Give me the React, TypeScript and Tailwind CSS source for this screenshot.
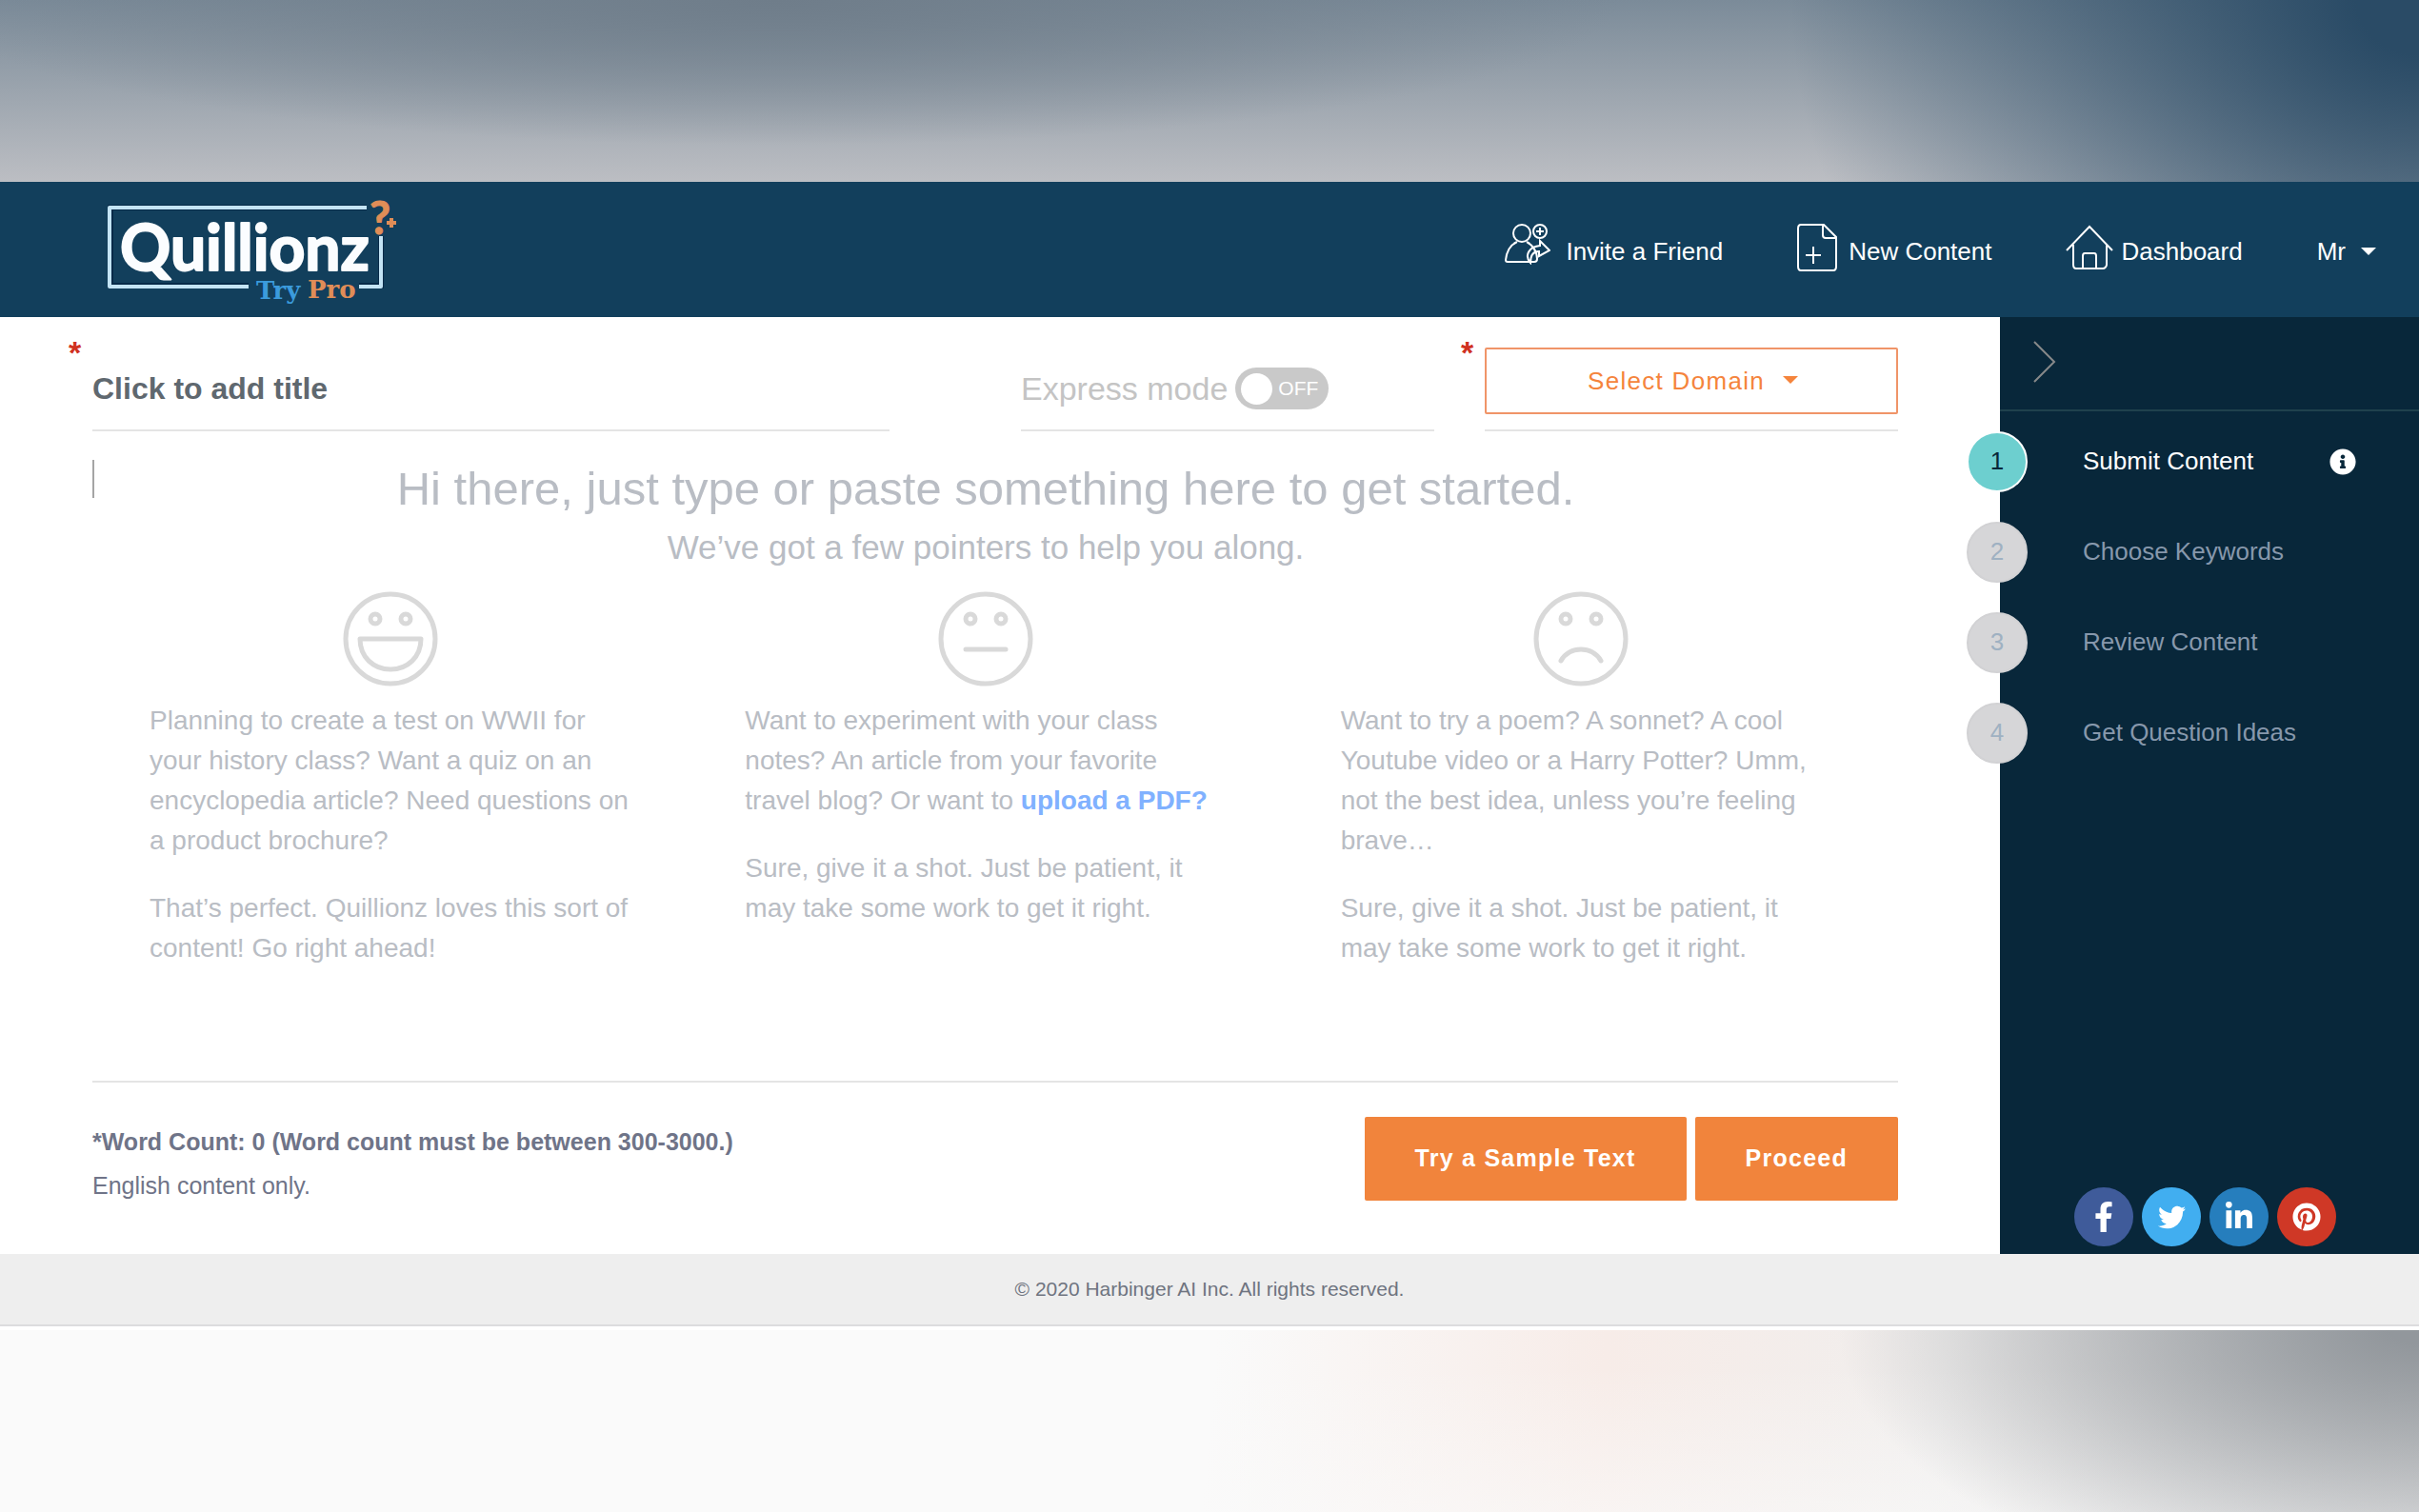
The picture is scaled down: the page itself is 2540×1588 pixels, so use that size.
import { FaFacebookF, FaInfoCircle, FaLinkedinIn, FaPinterest, FaTwitter } from "react-icons/fa";

interface Pointer {
  face: "happy" | "neutral" | "sad";
  first: React.ReactNode;
  second: string;
}

const steps = ["Submit Content", "Choose Keywords", "Review Content", "Get Question Ideas"];

const socials = [
  { name: "Facebook", icon: <FaFacebookF size={32} />, color: "bg-[#3f5b9a]" },
  { name: "Twitter", icon: <FaTwitter size={29} />, color: "bg-[#41aef0]" },
  { name: "LinkedIn", icon: <FaLinkedinIn size={32} />, color: "bg-[#267ebd]" },
  { name: "Pinterest", icon: <FaPinterest size={30} />, color: "bg-[#cf3826]" },
];

const pointers: Pointer[] = [
  {
    face: "happy",
    first:
      "Planning to create a test on WWII for your history class? Want a quiz on an encyclopedia article? Need questions on a product brochure?",
    second: "That’s perfect. Quillionz loves this sort of content! Go right ahead!",
  },
  {
    face: "neutral",
    first: (
      <>
        Want to experiment with your class notes? An article from your favorite travel blog? Or want to{" "}
        <a href="#upload" className="font-bold text-[#80b1ff]">
          upload a PDF?
        </a>
      </>
    ),
    second: "Sure, give it a shot. Just be patient, it may take some work to get it right.",
  },
  {
    face: "sad",
    first:
      "Want to try a poem? A sonnet? A cool Youtube video or a Harry Potter? Umm, not the best idea, unless you’re feeling brave…",
    second: "Sure, give it a shot. Just be patient, it may take some work to get it right.",
  },
];

function Logo() {
  return (
    <svg width="310" height="142" viewBox="0 -13 310 142" role="img" aria-label="Quillionz Try Pro">
      <g fill="none" stroke="#062a48" strokeWidth="6">
        <path d="M273 14H4V96H149M265 96H288V44" />
      </g>
      <g fill="none" stroke="#c3e4f5" strokeWidth="4" strokeLinejoin="round">
        <path d="M273 14H3V97H149M265 97H288V44" />
      </g>
      <text
        x="14"
        y="80"
        fill="#fbfdff"
        stroke="#fbfdff"
        strokeWidth="2"
        strokeLinejoin="round"
        fontFamily="Lato, sans-serif"
        fontWeight="700"
        fontSize="66"
      >
        Quillionz
      </text>
      <text x="157" y="110" fill="#3b9bdc" fontFamily="DejaVu Serif, serif" fontWeight="700" fontSize="26">
        Try
      </text>
      <text x="211" y="109" fill="#e08d57" fontFamily="DejaVu Serif, serif" fontWeight="700" fontSize="26">
        Pro
      </text>
      <text
        x="276"
        y="42"
        fill="#e08d57"
        stroke="#e08d57"
        strokeLinejoin="round"
        fontFamily="Lato, sans-serif"
        fontWeight="700"
        fontSize="48"
      >
        ?
      </text>
      <path d="M299 25V35M294 30H304" stroke="#e08d57" strokeWidth="4" />
    </svg>
  );
}

function InviteIcon() {
  return (
    <svg width="48" height="44" viewBox="0 0 48 44" fill="none" stroke="white" strokeWidth="2" className="mb-4">
      <circle cx="18" cy="11" r="9" />
      <path d="M13 20C6 23 2 30 1 39c0 1 1 2 2 2h28c2 0 3-1 3-3 0-8-5-15-11-18" />
      <circle cx="37" cy="9" r="7" />
      <path d="M37 5v8M33 9h8" />
      <path d="M37 19L47 29L36 35V30C30 30 27 34 27 42C20 34 26 25 37 24z" />
    </svg>
  );
}

function NewContentIcon() {
  return (
    <svg width="42" height="50" viewBox="0 0 42 50" fill="none" stroke="white" strokeWidth="2" className="mb-2">
      <path d="M4 1H28L41 14V45c0 2-1 4-3 4H4c-2 0-3-2-3-4V5c0-2 1-4 3-4z" />
      <path d="M27 2V12c0 2 1 3 3 3H40" />
      <path d="M17 24v18M9 33h16" />
    </svg>
  );
}

function HomeIcon() {
  return (
    <svg width="50" height="48" viewBox="0 0 50 48" fill="none" stroke="white" strokeWidth="2" className="mb-2">
      <path d="M1 27L25 2L49 27" />
      <path d="M8 21V42c0 2 1 4 3 4H39c2 0 4-2 4-4V21" />
      <path d="M18 46V33c0-2 1-3 2-3h10c1 0 2 1 2 3V46" />
    </svg>
  );
}

function Caret({ className }: { className?: string }) {
  return (
    <svg width="16" height="8" viewBox="0 0 16 8" fill="currentColor" className={className}>
      <path d="M0 0H16L8 8z" />
    </svg>
  );
}

function Face({ type }: { type: Pointer["face"] }) {
  return (
    <svg
      width="100"
      height="100"
      viewBox="0 0 100 100"
      fill="none"
      stroke="#d9d9d9"
      strokeWidth="5"
      className="mx-auto"
      aria-hidden="true"
    >
      <circle cx="50" cy="50" r="47" />
      <circle cx="34" cy="29" r="5" />
      <circle cx="66" cy="29" r="5" />
      {type === "happy" && <path d="M18 50H82C82 69 68 82 50 82S18 69 18 50z" strokeLinejoin="round" />}
      {type === "neutral" && <path d="M29 61H71" strokeLinecap="round" />}
      {type === "sad" && <path d="M29 73C38 57 62 57 71 73" strokeLinecap="round" />}
    </svg>
  );
}

function Header() {
  return (
    <header className="flex h-[142px] items-center justify-between bg-[#123f5c] pr-[45px] pl-[112px] text-[26px] text-white">
      <a href="#home">
        <Logo />
      </a>
      <nav className="flex items-center gap-[78px] pt-1">
        <a href="#invite" className="flex items-center gap-4">
          <InviteIcon />
          Invite a Friend
        </a>
        <a href="#new" className="flex items-center gap-3">
          <NewContentIcon />
          New Content
        </a>
        <a href="#dashboard" className="flex items-center gap-2">
          <HomeIcon />
          Dashboard
        </a>
        <button type="button" className="flex items-center gap-4">
          Mr
          <Caret />
        </button>
      </nav>
    </header>
  );
}

function Required() {
  return <span className="absolute top-5 -left-[25px] text-[34px] leading-none font-bold text-[#d0311f]">*</span>;
}

function ContentSettings() {
  return (
    <div className="flex h-[120px]">
      <div className="relative flex-[27] border-b-2 border-[#e4e4e4]">
        <Required />
        <input
          type="text"
          aria-label="Title"
          placeholder="Click to add title"
          className="mt-[50px] h-[50px] w-full text-[32px] font-bold outline-none placeholder:text-[#5f686f]"
        />
      </div>
      <div className="ml-[138px] flex-[14] border-b-2 border-[#e4e4e4] pt-[53px]">
        <label className="flex items-center gap-2 text-[34px] leading-[44px] text-[#c4c4c4]">
          Express mode
          <input type="checkbox" className="sr-only" />
          <span className="flex h-11 w-[98px] items-center gap-[6px] rounded-full bg-[#c9c9c9] pl-[6px] text-[21px] text-white">
            <span className="size-[33px] rounded-full bg-white" />
            OFF
          </span>
        </label>
      </div>
      <div className="relative ml-[53px] flex-[14] border-b-2 border-[#e4e4e4] pt-8 text-[#f5843c]">
        <Required />
        <select
          aria-label="Domain"
          className="h-[70px] w-full appearance-none rounded-xs border-2 border-[#f09468] pr-8 text-center text-[26px] tracking-wider outline-none"
        >
          <option>Select Domain</option>
        </select>
        <Caret className="pointer-events-none absolute top-[62px] left-1/2 ml-[96px]" />
      </div>
    </div>
  );
}

function Editor() {
  return (
    <section className="relative border-b-2 border-[#e4e4e4] pt-[30px] pr-5 pb-[118px] text-[#b9bdc4]">
      <textarea aria-label="Content" className="absolute inset-0 resize-none outline-none" />
      {/* text cursor */}
      <span className="absolute top-[30px] left-0 h-10 w-[2px] bg-[#a5a5a5]" />
      <div className="pointer-events-none relative">
        <h1 className="text-center text-[49px] leading-[60px]">
          Hi there, just type or paste something here to get started.
        </h1>
        <p className="mt-[10px] text-center text-[35px] leading-[44px]">We’ve got a few pointers to help you along.</p>
        <div className="mt-6 grid grid-cols-3">
          {pointers.map((item) => (
            <div key={item.face} className="px-[60px] text-[28px] leading-[42px]">
              <Face type={item.face} />
              <p className="mt-[15px]">{item.first}</p>
              <p className="mt-[29px]">{item.second}</p>
            </div>
          ))}
        </div>
      </div>
    </section>
  );
}

function Actions() {
  return (
    <div className="flex items-start justify-between pt-9 pb-[49px]">
      <div className="pt-[3px] text-[25px] leading-[46px] text-[#6f7488]">
        <p className="font-bold">*Word Count: 0 (Word count must be between 300-3000.)</p>
        <p>English content only.</p>
      </div>
      <div className="flex gap-[9px] text-[25px] font-bold tracking-wider text-white">
        <button type="button" className="h-[88px] rounded-xs bg-[#f1843c] px-[53px]">
          Try a Sample Text
        </button>
        <button type="button" className="h-[88px] rounded-xs bg-[#f1843c] px-[53px]">
          Proceed
        </button>
      </div>
    </div>
  );
}

function Sidebar() {
  return (
    <aside className="flex w-[440px] shrink-0 flex-col bg-[#08273a]">
      <div className="h-[99px] border-b-2 border-[#1f414d] pt-6 pl-[34px]">
        <button type="button" aria-label="Collapse steps">
          <svg width="26" height="46" viewBox="0 0 26 46" fill="none" stroke="#87898a" strokeWidth="2">
            <path d="M2 2L23 23L2 44" />
          </svg>
        </button>
      </div>
      <ol className="pt-[5px]">
        {steps.map((step, index) => (
          <li
            key={step}
            className={`relative flex h-[95px] items-center pr-[66px] pl-[87px] text-[26px] ${
              index === 0 ? "text-white" : "text-[#8798ac]"
            }`}
          >
            <span
              className={`absolute -left-[35px] flex size-16 items-center justify-center rounded-full border-2 text-[26px] ${
                index === 0
                  ? "border-white bg-[#6dcfcf] text-[#08273a]"
                  : "border-[#d2d2d4] bg-[#d6d6d8] text-[#9fb1c2]"
              }`}
            >
              {index + 1}
            </span>
            {step}
            {index === 0 && <FaInfoCircle size={28} className="ml-auto" />}
          </li>
        ))}
      </ol>
      <div className="mt-auto flex gap-[9px] pb-2 pl-[78px]">
        {socials.map((item) => (
          <a
            key={item.name}
            href={`#${item.name}`}
            aria-label={item.name}
            className={`flex size-[62px] items-center justify-center rounded-full text-white ${item.color}`}
          >
            {item.icon}
          </a>
        ))}
      </div>
    </aside>
  );
}

function App() {
  return (
    <div className="flex min-h-screen flex-col font-['Liberation_Sans',Arial,sans-serif]">
      <div className="h-[191px] bg-[radial-gradient(ellipse_26%_300%_at_100%_0%,#2a4b66_10%,#2a4b6600_100%),radial-gradient(ellipse_35%_80%_at_32%_0%,#6f7d8a_0%,#6f7d8a00_100%),linear-gradient(180deg,#7b8b99,#bcbec3)]" />
      <Header />
      <div className="flex bg-white">
        <main className="min-w-0 flex-1 pr-[107px] pl-[97px]">
          <ContentSettings />
          <Editor />
          <Actions />
        </main>
        <Sidebar />
      </div>
      <footer className="mb-1 border-b-2 border-[#dcdcde] bg-[#eeeeee] text-center text-[21px] leading-[74px] text-[#6f7480]">
        © 2020 Harbinger AI Inc. All rights reserved.
      </footer>
      <div className="flex-1 bg-[radial-gradient(ellipse_24%_150%_at_100%_0%,#92979c_5%,#92979c00_100%),linear-gradient(180deg,#fafafa00_20%,#fafafa90_100%),linear-gradient(95deg,#fafafa_50%,#f7ece8_66%,#f0eeed_80%,#d4d4d5_100%)]" />
    </div>
  );
}

export default App;
